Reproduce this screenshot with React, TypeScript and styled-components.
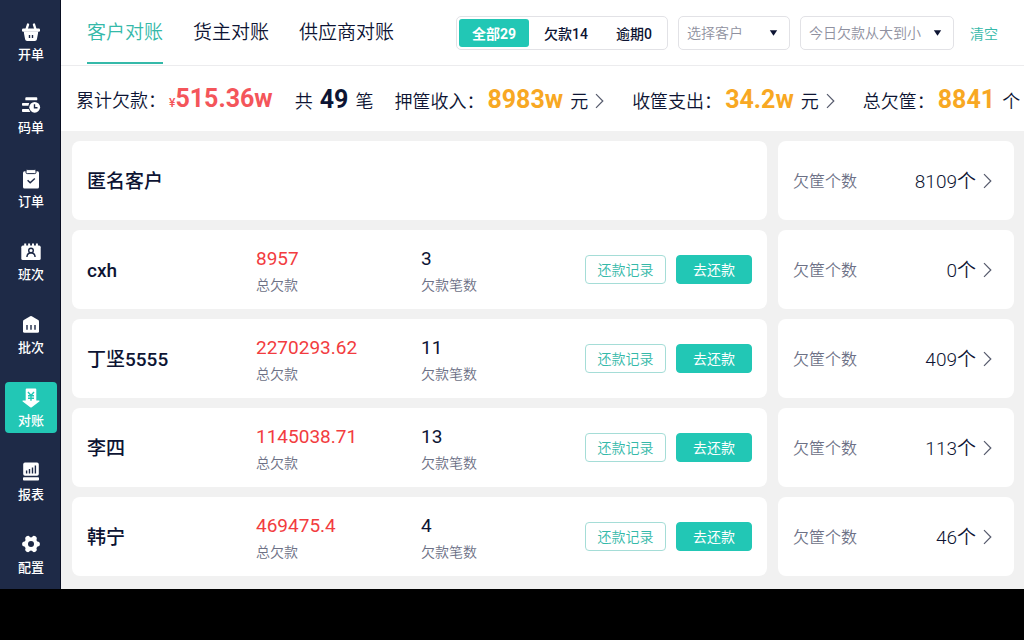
import React, { useState } from "react";
import styled, { createGlobalStyle } from "styled-components";

const teal = "#22c7b5";
const navy = "#1e2a47";
const ink = "#0d1433";

const GlobalStyle = createGlobalStyle`
  * { box-sizing: border-box; }
  body {
    margin: 0;
    background: #000;
    color: ${ink};
    font-family: Roboto, "Noto Sans CJK SC", sans-serif;
  }
  button, select { font-family: inherit; color: inherit; }
  button { border: 0; padding: 0; background: none; cursor: pointer; }
`;

const Shell = styled.div`
  display: flex;
  background: #f1f1f1;
`;

const Sidebar = styled.nav`
  flex: none;
  width: 61px;
  padding: 16px 3px 9px 5px;
  display: flex;
  flex-direction: column;
  justify-content: space-between;
  background: ${navy};
  border-right: 1px solid #0a0f22;
`;

const NavItem = styled.button<{ $active: boolean }>`
  height: 51px;
  padding-top: 6px;
  display: flex;
  flex-direction: column;
  align-items: center;
  gap: 4px;
  border-radius: 4px;
  background: ${(p) => (p.$active ? teal : "transparent")};
  color: #fff;
  --hole: ${(p) => (p.$active ? teal : navy)};
  font-size: 13px;
  line-height: 18px;
  font-weight: 500;

  svg { display: block; }
`;

const Main = styled.main`
  flex: 1;
  min-width: 0;
`;

const Header = styled.header`
  display: flex;
  justify-content: space-between;
  padding: 0 26px;
  height: 66px;
  background: #fff;
  border-bottom: 1px solid #ececee;
`;

const Tabs = styled.div`
  display: flex;
  gap: 30px;
`;

const Tab = styled.button<{ $active: boolean }>`
  height: 64px;
  padding-bottom: 1px;
  border-bottom: 2px solid ${(p) => (p.$active ? "#35b9a9" : "transparent")};
  color: ${(p) => (p.$active ? "#35b9a9" : ink)};
  font-size: 19px;
  font-weight: 350;
  white-space: nowrap;
`;

const Filters = styled.div`
  display: flex;
  align-items: center;
  gap: 10px;
`;

const Segment = styled.div`
  display: flex;
  gap: 2px;
  height: 34px;
  padding: 2px;
  border: 1px solid #e2e2e6;
  border-radius: 5px;
`;

const SegmentButton = styled.button<{ $active: boolean }>`
  padding: 0 13px;
  border-radius: 3px;
  background: ${(p) => (p.$active ? teal : "transparent")};
  color: ${(p) => (p.$active ? "#fff" : ink)};
  font-size: 14px;
  font-weight: ${(p) => (p.$active ? 700 : 500)};
  white-space: nowrap;
`;

const SelectBox = styled.label<{ $width: number }>`
  position: relative;
  width: ${(p) => p.$width}px;
  height: 34px;

  select {
    appearance: none;
    width: 100%;
    height: 100%;
    padding: 0 24px 0 8px;
    border: 1px solid #e2e2e6;
    border-radius: 5px;
    background: #fff;
    color: #8f91a0;
    font-size: 14px;
    font-weight: 350;
  }

  svg {
    position: absolute;
    right: 12px;
    top: 14px;
    pointer-events: none;
  }
`;

const ClearButton = styled.button`
  margin-left: 6px;
  color: #35b9a9;
  font-size: 14px;
  font-weight: 350;
`;

const Summary = styled.section`
  display: flex;
  align-items: center;
  gap: 21px;
  height: 65px;
  padding: 5px 5px 0 15px;
  background: #fff;
  overflow: hidden;
`;

const Stat = styled.div<{ $centered?: boolean }>`
  display: flex;
  align-items: ${(p) => (p.$centered ? "center" : "baseline")};
  font-size: 18px;
  line-height: 30px;
  font-weight: 350;
  white-space: nowrap;

  svg { align-self: center; margin-left: 7px; }
`;

const Group = styled.div`
  display: flex;
  gap: 28px;
`;

const Figure = styled.strong<{ $tone: string; $lead?: number; $trail?: number }>`
  margin-left: ${(p) => p.$lead ?? 3}px;
  margin-right: ${(p) => p.$trail ?? 7}px;
  color: ${(p) => p.$tone};
  font-size: 25px;
  font-weight: 700;

  small { font-size: 12px; font-weight: 500; }
`;

const List = styled.ul`
  margin: 0;
  padding: 10px 10px 13px 11px;
  display: grid;
  gap: 10px;
  list-style: none;
`;

const Row = styled.li`
  display: grid;
  grid-template-columns: minmax(0, 695fr) minmax(0, 236fr);
  gap: 11px;
`;

const Card = styled.div`
  display: grid;
  grid-template-columns: 169px 165px 1fr auto;
  align-items: center;
  height: 79px;
  padding: 0 15px;
  border-radius: 8px;
  background: #fff;
`;

const Name = styled.h2`
  margin: 0;
  padding-top: 2px;
  font-size: 19px;
  line-height: 26px;
  font-weight: 500;
`;

const Metric = styled.dl<{ $tone: string }>`
  margin: 0;
  padding-top: 4px;
  display: flex;
  flex-direction: column-reverse;
  line-height: 26px;

  dt { color: #6d7186; font-size: 14px; font-weight: 350; }
  dd { margin: 0; color: ${(p) => p.$tone}; font-size: 19px; }
`;

const Actions = styled.div`
  grid-column: 4;
  display: flex;
  gap: 10px;
`;

const ActionButton = styled.button<{ $primary?: boolean }>`
  width: ${(p) => (p.$primary ? 76 : 81)}px;
  height: 29px;
  padding-bottom: 2px;
  border: 1px solid ${(p) => (p.$primary ? teal : "#a5ddd7")};
  border-radius: 4px;
  background: ${(p) => (p.$primary ? teal : "#fff")};
  color: ${(p) => (p.$primary ? "#fff" : "#35b9a9")};
  font-size: 14px;
  font-weight: ${(p) => (p.$primary ? 400 : 350)};
`;

const CrateCard = styled.button`
  display: flex;
  align-items: center;
  gap: 7px;
  padding: 0 22px 0 15px;
  border-radius: 8px;
  background: #fff;
  line-height: 24px;
  text-align: left;
`;

const CrateLabel = styled.span`
  flex: 1;
  padding-top: 2px;
  color: #6d7186;
  font-size: 16px;
  font-weight: 350;
`;

const CrateCount = styled.span`
  padding-top: 2px;
  font-size: 19px;
  font-weight: 350;
`;

const Chevron = () => (
  <svg width="9" height="16" viewBox="0 0 9 16" fill="none" stroke="#555a6c" strokeWidth="1.2" aria-hidden="true">
    <path d="M1 1.2 7.8 8 1 14.8" />
  </svg>
);

const Caret = () => (
  <svg width="9" height="6" viewBox="0 0 9 6" fill={ink} aria-hidden="true">
    <path d="M.8.3h7.4L4.5 5.8z" />
  </svg>
);

const hole = { stroke: "var(--hole)", fill: "none", strokeWidth: 1.4 };

const icons: Record<string, React.ReactNode> = {
  开单: (
    <>
      <path stroke="currentColor" strokeWidth="2.4" strokeLinecap="round" d="M7 2.600 5.600 7M13 2.600 14.400 7" />
      <rect x="1" y="6.400" width="18" height="3.400" rx="1.200" />
      <path d="M2.800 10.600h14.400l-1.300 6.700a2 2 0 0 1-2 1.700H6.100a2 2 0 0 1-2-1.700z" />
      <path d="M3 9.500h14v1.500H3z" />
      <path {...hole} d="M8.500 13v3M11.500 13v3" />
    </>
  ),
  码单: (
    <>
      <path d="M5.200 2.300h10.200a.9.9 0 0 1 .9.9v1.200a.9.9 0 0 1-.9.9H5.200a.9.9 0 0 1-.9-.9V3.200a.9.9 0 0 1 .9-.9zM1.800 8H8.200L7.400 10.700H1.800a.8.8 0 0 1-.8-.8V8.800a.8.8 0 0 1 .8-.8zM1.800 14H7.700l1.600 3H1.800a.8.8 0 0 1-.8-.8V14.800a.8.8 0 0 1 .8-.8z" />
      <circle cx="13.700" cy="12.300" r="5.400" />
      <path {...hole} d="M13.500 9.200v3.500h3" />
    </>
  ),
  订单: (
    <>
      <rect x="2" y="2.200" width="16" height="17.300" rx="1.500" />
      <rect x="5" y=".6" width="10" height="4" rx="1.200" stroke="var(--hole)" strokeWidth="1" />
      <path {...hole} d="m6.600 11.200 2.600 2.600 4.600-4.400" />
    </>
  ),
  班次: (
    <>
      <rect x=".3" y="3.600" width="19.400" height="14.400" rx="1.600" />
      <path stroke="currentColor" strokeWidth="2" d="M4.200 1.500V5M8.100 1.500V5M12 1.500V5M15.900 1.500V5" />
      <circle {...hole} cx="10" cy="8.500" r="2.300" />
      <path {...hole} d="M5.900 15c.2-2.700 1.900-4.200 4.100-4.200s3.900 1.500 4.100 4.200" />
    </>
  ),
  批次: (
    <>
      <path d="M9.200 1.300a1.600 1.600 0 0 1 1.600 0l6.400 3.800c.5.3.8.8.8 1.400v9.700a1.500 1.500 0 0 1-1.500 1.500h-13A1.500 1.500 0 0 1 2 16.200V6.500c0-.6.3-1.100.8-1.400z" />
      <path {...hole} d="M6 10v4.800M10 10v4.800M14 10v4.800" />
    </>
  ),
  对账: (
    <>
      <path d="M5.700.6h8.600a1 1 0 0 1 1 1v10.800h2.500c.7 0 1 .7.500 1.200l-7.500 5.600a1.400 1.400 0 0 1-1.600 0l-7.500-5.600c-.5-.5-.2-1.200.5-1.200h2.500V1.600a1 1 0 0 1 1-1z" />
      <path {...hole} d="m7 4 3 3.400L13 4M7 7.800h6M7 10.300h6M10 7.400v5.400" />
    </>
  ),
  报表: (
    <>
      <rect x="2.200" y=".6" width="15.600" height="13.200" rx="1.800" />
      <rect x="2" y="15.200" width="16" height="3.200" rx=".9" />
      <path {...hole} d="M5.600 8.600v3M8.500 7v4.600M11.500 5.500v6.100M14.400 3.600v8" />
    </>
  ),
  配置: (
    <>
      <circle cx="10" cy="9" r="6.800" />
      <path
        stroke="currentColor"
        strokeWidth="5"
        strokeLinecap="round"
        d="M3.600 9h12.800M6.800 3.400l6.400 11.200M13.200 3.400 6.800 14.600"
      />
      <circle cx="10" cy="9" r="3" fill="var(--hole)" />
    </>
  ),
};

const tabs = ["客户对账", "货主对账", "供应商对账"];
const segments = ["全部29", "欠款14", "逾期0"];

const customers = [
  { name: "匿名客户", crates: 8109 },
  { name: "cxh", debt: "8957", orders: 3, crates: 0 },
  { name: "丁坚5555", debt: "2270293.62", orders: 11, crates: 409 },
  { name: "李四", debt: "1145038.71", orders: 13, crates: 113 },
  { name: "韩宁", debt: "469475.4", orders: 4, crates: 46 },
];

export default function App() {
  const [page, setPage] = useState("对账");
  const [tab, setTab] = useState(tabs[0]);
  const [segment, setSegment] = useState(segments[0]);

  return (
    <>
      <GlobalStyle />
      <Shell>
        <Sidebar>
          {Object.keys(icons).map((name) => (
            <NavItem key={name} $active={name === page} onClick={() => setPage(name)}>
              <svg width="20" height="20" viewBox="0 0 20 20" fill="currentColor" aria-hidden="true">
                {icons[name]}
              </svg>
              {name}
            </NavItem>
          ))}
        </Sidebar>
        <Main>
          <Header>
            <Tabs>
              {tabs.map((name) => (
                <Tab key={name} $active={name === tab} onClick={() => setTab(name)}>
                  {name}
                </Tab>
              ))}
            </Tabs>
            <Filters>
              <Segment>
                {segments.map((name) => (
                  <SegmentButton key={name} $active={name === segment} onClick={() => setSegment(name)}>
                    {name}
                  </SegmentButton>
                ))}
              </Segment>
              <SelectBox $width={112}>
                <select aria-label="客户">
                  <option>选择客户</option>
                </select>
                <Caret />
              </SelectBox>
              <SelectBox $width={154}>
                <select aria-label="排序">
                  <option>今日欠款从大到小</option>
                </select>
                <Caret />
              </SelectBox>
              <ClearButton>清空</ClearButton>
            </Filters>
          </Header>
          <Summary>
            <Stat $centered>
              累计欠款：
              <Figure $tone="#f4555a" $trail={1}>
                <small>¥</small>515.36w
              </Figure>
            </Stat>
            <Stat>
              共<Figure $tone={ink} $lead={7}>49</Figure>笔
            </Stat>
            <Group>
              <Stat>
                押筐收入：<Figure $tone="#f8a823">8983w</Figure>元<Chevron />
              </Stat>
              <Stat>
                收筐支出：<Figure $tone="#f8a823">34.2w</Figure>元<Chevron />
              </Stat>
              <Stat>
                总欠筐：<Figure $tone="#f8a823">8841</Figure>个
              </Stat>
            </Group>
          </Summary>
          <List>
            {customers.map((c) => (
              <Row key={c.name}>
                <Card>
                  <Name>{c.name}</Name>
                  {c.debt && (
                    <>
                      <Metric $tone="#f23c40">
                        <dt>总欠款</dt>
                        <dd>{c.debt}</dd>
                      </Metric>
                      <Metric $tone={ink}>
                        <dt>欠款笔数</dt>
                        <dd>{c.orders}</dd>
                      </Metric>
                      <Actions>
                        <ActionButton>还款记录</ActionButton>
                        <ActionButton $primary>去还款</ActionButton>
                      </Actions>
                    </>
                  )}
                </Card>
                <CrateCard>
                  <CrateLabel>欠筐个数</CrateLabel>
                  <CrateCount>{c.crates}个</CrateCount>
                  <Chevron />
                </CrateCard>
              </Row>
            ))}
          </List>
        </Main>
      </Shell>
    </>
  );
}
